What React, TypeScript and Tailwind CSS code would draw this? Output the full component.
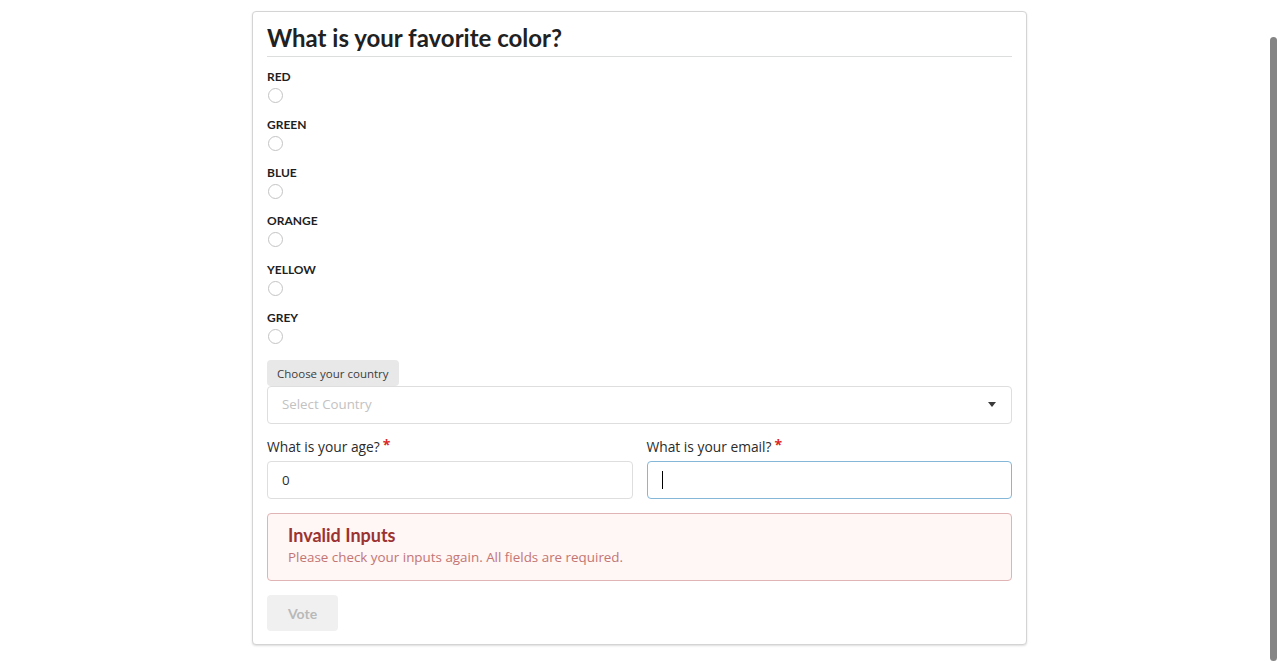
import React from 'react';

const colors = ['Red', 'Green', 'Blue', 'Orange', 'Yellow', 'Grey'];

function RequiredLabel({ text }: { text: string }) {
  return (
    <div className="h-[18px] leading-[18px] text-[13.8px] text-[#2b2b2b] font-['Open_Sans',sans-serif]">
      {text}
      <span className="ml-[3px] text-[#db2828] text-[14px] font-bold align-top leading-[14px]">*</span>
    </div>
  );
}

export default function App() {
  return (
    <div className="min-h-screen bg-white pt-[11px] font-['Lato',sans-serif]">
      <div className="w-[775px] mx-auto bg-white border border-[#d4d4d5] rounded-[4px] shadow-[0_1px_2px_0_rgba(34,36,38,0.15)] px-[14px] pt-[12px] pb-[13px]">
        {/* Header */}
        <h2 className="text-[24px] font-bold leading-[1.2] text-[#212121] pb-[3px] border-b border-[#dcdddd]">
          What is your favorite color?
        </h2>

        {/* Colour radios */}
        <div className="mt-[12px] flex flex-col gap-[14.2px]">
          {colors.map((c) => (
            <div key={c} className="flex flex-col">
              <span className="text-[12px] leading-[16px] font-bold uppercase text-[#1f1f1f]">{c}</span>
              <span className="mt-[3px] ml-[1px] w-[15px] h-[15px] rounded-full border border-[#c4c4c4] bg-white" />
            </div>
          ))}
        </div>

        {/* Country */}
        <div className="mt-[16px] font-['Open_Sans',sans-serif]">
          <div className="inline-flex items-center h-[26px] px-[10px] rounded-[4px] bg-[#e8e8e8] text-[11.5px] text-[#3d3d3d]">
            Choose your country
          </div>
          <div className="h-[38px] flex items-center justify-between border border-[#dededf] rounded-[4px] pl-[14px] pr-[15px]">
            <span className="text-[13.3px] text-[#c2c2c2]">Select Country</span>
            <svg width="8" height="5" viewBox="0 0 8 5" className="mb-[1px]">
              <path d="M0 0 L8 0 L4 5 Z" fill="#3a3a3a" />
            </svg>
          </div>
        </div>

        {/* Age / email */}
        <div className="mt-[14px] grid grid-cols-2 gap-[14px] font-['Open_Sans',sans-serif]">
          <div className="flex flex-col">
            <RequiredLabel text="What is your age?" />
            <div className="mt-[5px] h-[38px] flex items-center border border-[#dededf] rounded-[4px] pl-[14px] pr-[14px] pt-[1px] text-[13.3px] text-[#2b2b2b]">
              0
            </div>
          </div>
          <div className="flex flex-col">
            <RequiredLabel text="What is your email?" />
            <div className="mt-[5px] h-[38px] flex items-center border border-[#85b7d9] rounded-[4px] px-[14px]">
              <span className="w-px h-[18px] bg-black" />
            </div>
          </div>
        </div>

        {/* Error message */}
        <div className="mt-[14px] h-[68px] border border-[#e0b4b4] rounded-[4px] bg-[#fff6f6] px-[20px] pt-[11px]">
          <div className="text-[18px] leading-[1.2] font-bold text-[#9a3331]">Invalid Inputs</div>
          <div className="text-[13.4px] leading-[20px] text-[#c27573] font-['Open_Sans',sans-serif]">
            Please check your inputs again. All fields are required.
          </div>
        </div>

        {/* Vote */}
        <button
          disabled
          className="mt-[14px] h-[36px] px-[21px] rounded-[4px] bg-[#f0f0f0] text-[14px] font-bold text-[#b9b9b9]"
        >
          Vote
        </button>
      </div>

      {/* overlay scrollbar thumb */}
      <div className="fixed right-[2px] top-[37px] w-[7px] h-[624px] rounded-full bg-[#858585]" />
    </div>
  );
}
